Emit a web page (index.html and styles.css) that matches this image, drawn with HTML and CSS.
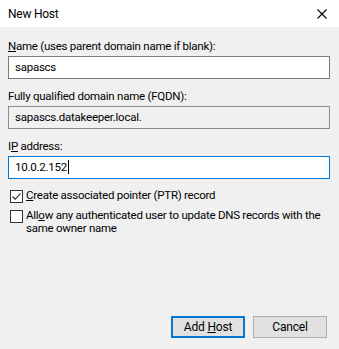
FILE: index.html
```html
<!DOCTYPE html>
<html lang="en">
<head>
    <meta charset="UTF-8">
    <meta name="viewport" content="width=device-width, initial-scale=1.0">
    <title>New Host</title>
    <link rel="stylesheet" href="styles.css">
</head>
<body>
    <div class="dialog">
        <div class="titlebar">
            <span class="title">New Host</span>
            <svg class="close" width="10" height="10" viewBox="0 0 10 10">
                <path d="M0.5 0.5 L9.5 9.5 M9.5 0.5 L0.5 9.5" stroke="#000" stroke-width="1.1" fill="none"/>
            </svg>
        </div>
        <div class="content">
            <div class="field">
                <label><u>N</u>ame (uses parent domain name if blank):</label>
                <div class="box">sapascs</div>
            </div>
            <div class="field">
                <label>Fully qualified domain name (FQDN):</label>
                <div class="box readonly">sapascs.datakeeper.local.</div>
            </div>
            <div class="field">
                <label>I<u>P</u> address:</label>
                <div class="box focused">10.0.2.152<span class="caret"></span></div>
            </div>
            <div class="check">
                <span class="checkbox">
                    <svg width="11" height="11" viewBox="0 0 11 11">
                        <path d="M1.5 5.5 L4.2 8.2 L9.5 2.5" stroke="#222" stroke-width="1.1" fill="none"/>
                    </svg>
                </span>
                <span class="check-text"><u>C</u>reate associated pointer (PTR) record</span>
            </div>
            <div class="check">
                <span class="checkbox"></span>
                <span class="check-text">All<u>o</u>w any authenticated user to update DNS records with the same owner name</span>
            </div>
        </div>
        <div class="buttons">
            <button class="btn default">Add <u>H</u>ost</button>
            <button class="btn">Cancel</button>
        </div>
    </div>
</body>
</html>
```

FILE: styles.css
```css
body { margin: 0; font-family: Roboto, "Noto Sans", sans-serif; font-size: 11.5px; letter-spacing: -0.25px; color: #000; }
.dialog { width: 339px; height: 349px; background: #f0f0f0; display: flex; flex-direction: column; }
.titlebar { height: 27px; background: #fff; display: flex; align-items: center; justify-content: space-between; padding: 0 12px 0 8px; }
.title { font-size: 12px; }
.content { padding: 12px 9px 0 8px; }
.field { margin-bottom: 10px; }
.field label { display: block; line-height: 15px; margin-bottom: 2px; }
.box { height: 21px; border: 1px solid #7a7a7a; background: #fff; line-height: 21px; padding-left: 6px; }
.box.readonly { background: #f0f0f0; border-color: #8c8c8c; }
.box.focused { border-color: #0078d7; }
.caret { display: inline-block; width: 1px; height: 14px; background: #000; vertical-align: -3px; margin-left: 1px; }
.check { display: flex; align-items: flex-start; margin-left: 2px; margin-bottom: 6px; }
.checkbox { flex: none; width: 11px; height: 11px; border: 1px solid #333; background: #fff; margin-top: 1px; margin-right: 3px; display: flex; }
.check-text { line-height: 13px; }
.buttons { margin-top: auto; display: flex; justify-content: flex-end; gap: 8px; padding: 0 12px 11px 0; }
.btn { width: 74px; height: 22px; font-family: inherit; font-size: 12px; letter-spacing: -0.2px; background: #e1e1e1; border: 1px solid #adadad; padding: 0; color: #000; }
.btn.default { border: 2px solid #0078d7; }
```
